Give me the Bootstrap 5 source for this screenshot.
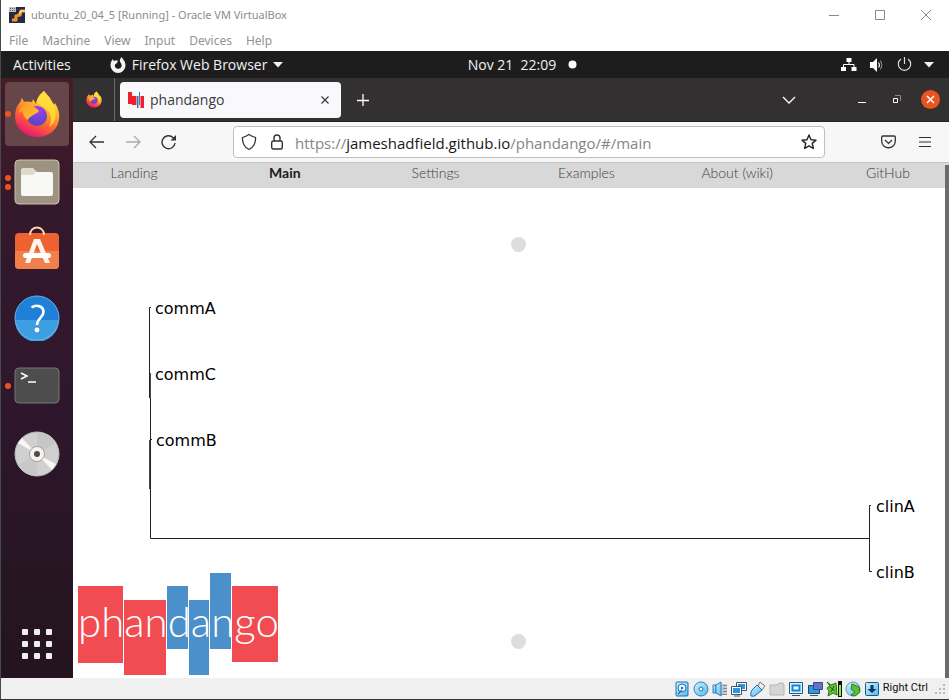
<!DOCTYPE html>
<html lang="en">
<head>
<meta charset="utf-8">
<meta name="viewport" content="width=device-width, initial-scale=1">
<title>ubuntu_20_04_5 [Running] - Oracle VM VirtualBox</title>
<link href="https://cdn.jsdelivr.net/npm/bootstrap@5.3.0/dist/css/bootstrap.min.css" rel="stylesheet">
<style>
body{font-family:"Open Sans","Noto Sans",sans-serif;background:#fff;border-left:1px solid #454a4c;border-bottom:1px solid #333}
button{background:none;border:0;padding:0;color:inherit;line-height:1}
svg{display:block;flex:none}
.vm-title{height:30px;color:#8c8c8c;padding:0 17px 0 8px;font-family:"Noto Sans",sans-serif;font-size:11px;gap:6px}
.vm-controls{gap:34px}
.vm-menu{height:21px;font-size:12px;color:#939393;gap:14px;padding:0 8px;font-family:"Noto Sans",sans-serif}
.gnome-bar{height:27px;background:#1d1d1d;color:#f2f2f2;font-size:14px;padding:0 11px 0 12px}
.gnome-side{flex:1 1 0}
.app-menu{margin-left:39px;gap:6px}
.clock{padding-left:94px;gap:12px}
.dock{width:72px;background:linear-gradient(#461c27 0,#34182b 22%,#2f172d 50%,#23141f 100%);padding-top:4px;padding-bottom:2px}
.dock-item{width:64px;height:64px;border-radius:4px;position:relative;display:grid;place-items:center}
.dock-item.current{background:#664649}
.pips{position:absolute;left:0;top:0;height:64px;width:6px;gap:3px}
.pips i{width:6px;height:6px;border-radius:50%;background:#e95420}
.tab-strip{height:44px;background:#323030;color:#fbfbfe;border-bottom:1px solid #222;padding-right:9px}
.pinned{width:42px;align-self:stretch;border-right:1px solid #6b6969;display:grid;place-items:center}
.page-tab{width:221px;height:36px;margin-left:5px;border-radius:4px;background:#f9f9fb;color:#3b3b3d;font-size:14px;padding:0 11px 0 8px;gap:6px}
.close-dot{width:19px;height:19px;border-radius:50%;background:#e95420;color:#fff;display:grid;place-items:center;margin-left:20px}
.min-win{margin-left:62px}
.max-win{margin-left:25px}
.toolbar{height:41px;background:#f7f7f7;border-bottom:1px solid #c6c6c6;color:#2e2e33;padding:0 18px 0 16px}
.nav-tools{gap:20px}
.menu-tools{gap:23px}
.url-box{margin:0 56px;height:32px;border:1px solid #bfbfc2;border-radius:4px;background:#fff;padding:0 7px;position:relative}
.url-box input{border:0;outline:0;background:transparent;min-width:0;height:28px;margin-left:10px}
.url-box .lock{margin-left:14px}
.url-text{position:absolute;left:61px;top:5px;font-size:15px;line-height:22px;color:#85858a;pointer-events:none;white-space:nowrap}
.url-text b{font-weight:500;color:#18181b}
.site-nav{height:25px;background:#d8d8d8;font-family:Lato,sans-serif;font-size:14px}
.site-nav a{width:122px;text-align:center;text-decoration:none;color:#404040;font-weight:300;line-height:20px}
.site-nav a.current{color:#1b1b1b;font-weight:700}
.tree{width:100%;height:auto}
.tree text{font:16px "DejaVu Sans",sans-serif;fill:#000}
.tree .wordmark{font:300 42px Lato,sans-serif;fill:#fff}
.thumb{position:absolute;right:0;top:2px;bottom:0;width:4px;background:#6b6b6b}
.vm-status{height:21px;background:#f0f0f0;color:#111;font-size:11px;gap:3px;padding:0 4px 0 0;font-family:Roboto,sans-serif}
</style>
<script src="https://cdn.jsdelivr.net/npm/bootstrap@5.3.0/dist/js/bootstrap.bundle.min.js"></script>
</head>
<body class="d-flex flex-column min-vh-100 overflow-x-hidden">
<svg width="0" height="0" class="position-absolute" aria-hidden="true">
<defs>
<linearGradient id="fxBody" x1=".8" y1="0" x2=".3" y2="1"><stop offset="0" stop-color="#fff24a"/><stop offset=".35" stop-color="#ffb52b"/><stop offset=".68" stop-color="#ff5a36"/><stop offset="1" stop-color="#e3127c"/></linearGradient>
<radialGradient id="fxGlobe" cx=".55" cy=".25" r=".8"><stop offset="0" stop-color="#a63df0"/><stop offset=".5" stop-color="#7344d8"/><stop offset="1" stop-color="#4b4bb5"/></radialGradient>
<linearGradient id="fxFox" x1="0" y1="0" x2="1" y2="1"><stop offset="0" stop-color="#ff9a1f"/><stop offset="1" stop-color="#ffc43a"/></linearGradient>
<linearGradient id="vbBlue" x1="0" y1="0" x2="1" y2="1"><stop offset="0" stop-color="#d5f2ff"/><stop offset="1" stop-color="#52b9ee"/></linearGradient>
<symbol id="firefox" viewBox="0 0 46 48">
<path d="M30 1c2 3 5 5 7 9 1 2 2 3 3 5 0-1 1-2 1-2 3 5 5 10 4 16C44 40 34 47 23 47 11 47 1 38 1 26c0-6 2-11 6-15 0-1 0-2 1-3l2 4c3-1 5 0 8 0l1-3c1 2 3 4 3 5 1-6 4-10 8-13z" fill="url(#fxBody)"/>
<path d="M30 1c2 3 5 5 7 9 7 10 6 23-2 27 4-8 2-15-4-19-4-3-8-4-8-6 0-4 4-9 7-11z" fill="#ffde3c" opacity=".8"/>
<circle cx="23" cy="26" r="10" fill="url(#fxGlobe)"/>
<path d="M7 17c3-3 8-2 12-1 2 2 5 3 6 5-1 2-5 3-7 5-2 1-4 2-4 4-4-2-5-6-5-9-1 0-3 1-4 2 0-2 1-4 2-6z" fill="url(#fxFox)"/>
</symbol>
<symbol id="caret" viewBox="0 0 10 6"><path d="M0 0h10L5 5.500z" fill="currentColor"/></symbol>
</defs>
</svg>

<header class="vm-title d-flex align-items-center">
<svg width="16" height="16" viewBox="0 0 16 16" aria-hidden="true"><path fill="#252b42" d="M0 0h16v16H0z"/><path d="M3 13h4V9l4-1 1-4h4" fill="none" stroke="#f4912b" stroke-width="3.200" stroke-linejoin="round"/><path d="M10 7l2-3h4" fill="none" stroke="#ffd9a5" stroke-width="1.500"/><path d="M0 0h7v5H0z" fill="#c4c4c8"/><path d="M1 1.500h5M1 3.500h5" stroke="#666" stroke-dasharray="1 1"/></svg>
<span class="me-auto text-nowrap">ubuntu_20_04_5 [Running] - Oracle VM VirtualBox</span>
<div class="vm-controls d-flex align-items-center">
<button aria-label="Minimize"><svg width="11" height="11"><path d="M0 5.500h10" stroke="#888"/></svg></button>
<button aria-label="Maximize"><svg width="12" height="12"><path d="M1.500 1.500h9v9h-9z" fill="none" stroke="#888"/></svg></button>
<button aria-label="Close"><svg width="12" height="12"><path d="M1 1l10 10M11 1L1 11" stroke="#888"/></svg></button>
</div>
</header>
<nav class="vm-menu d-flex align-items-center" aria-label="Virtual machine menu">
<button>File</button><button>Machine</button><button>View</button><button>Input</button><button>Devices</button><button>Help</button>
</nav>

<div class="gnome-bar d-flex align-items-center text-nowrap">
<div class="gnome-side d-flex align-items-center">
<button>Activities</button>
<button class="app-menu d-flex align-items-center">
<svg width="16" height="16" viewBox="0 0 16 16" aria-hidden="true"><path fill-rule="evenodd" d="M11.500 0c1 2 4 4 4 8.500a7.500 7.500 0 0 1-15 0C.5 5.500 1.500 3.500 3 2l.6 2C5 3.500 6 3.500 8 3.500L7 6 5.500 7c-1 1-.8 2.500 0 3.500 1.500 2 5.200 1.500 6-1 .6-2-.5-3.500-1.500-4.500-.5-2 .5-4 1.500-5z" fill="#f3f3f3"/></svg>
Firefox Web Browser<svg width="10" height="6"><use href="#caret"/></svg></button>
</div>
<div class="clock d-flex align-items-center"><span>Nov 21&nbsp; 22:09</span><svg width="9" height="9" aria-hidden="true"><circle cx="4.500" cy="4.500" r="4" fill="#fff"/></svg></div>
<div class="gnome-side d-flex align-items-center justify-content-end gap-2">
<svg class="me-1" width="16" height="14" viewBox="0 0 16 14" aria-label="Network"><path d="M5.500 0h5v4h-5zM0 9h5v4H0zM10.500 9h5v4h-5z" fill="#fff"/><path d="M8 4v3M2.500 9V6.500h10.500V9" stroke="#fff" fill="none"/></svg>
<svg class="me-1" width="16" height="14" viewBox="0 0 16 14" aria-label="Volume"><path d="M1 4h3l4-4v14l-4-4H1z" fill="#fff"/><path d="M9.500 4.500q2 2.500 0 5" stroke="#eee" fill="none" stroke-width="1.200"/><path d="M11.500 2.500q3 4.500 0 9" stroke="#999" fill="none"/></svg>
<svg class="me-1" width="15" height="15" viewBox="0 0 15 15" aria-label="Power"><path d="M4 2a6.200 6.200 0 1 0 7 0M7.500 0v7" stroke="#ddd" fill="none" stroke-width="1.200"/></svg>
<svg width="10" height="6" class="me-1" aria-hidden="true"><use href="#caret"/></svg>
</div>
</div>

<div class="d-flex flex-grow-1">
<aside class="dock d-flex flex-column align-items-center flex-shrink-0 gap-1">
<button class="dock-item current" aria-label="Firefox"><span class="pips d-flex flex-column justify-content-center"><i></i></span><svg width="46" height="48"><use href="#firefox"/></svg></button>
<button class="dock-item" aria-label="Files"><span class="pips d-flex flex-column justify-content-center"><i></i><i></i></span><svg width="46" height="46" viewBox="0 0 46 46"><rect x="1" y="1" width="44" height="44" rx="4" fill="#9e9380" stroke="#c8c2b3"/><path d="M7 14V11q0-2 2-2h10l4 4h14v6H7z" fill="#dedacd"/><path d="M7 16h12l3-3h15q2 0 2 2v20q0 2-2 2H9q-2 0-2-2z" fill="#f8f8f6"/></svg></button>
<button class="dock-item" aria-label="Ubuntu Software"><svg width="46" height="48" viewBox="0 0 46 48"><rect x="1" y="7" width="44" height="36" rx="4" fill="#ed6230"/><path d="M1 25h44v14q0 4-4 4H5q-4 0-4-4z" fill="#f17f4b"/><path d="M16 9c0-10 14-10 14 0" fill="none" stroke="#f9d7a8" stroke-width="2"/><path d="M20 13h6l10 24h-5l-8-19-7 19h-5z" fill="#fff4ee"/><rect x="9" y="27" width="28" height="5" rx="2.500" fill="#fff"/></svg></button>
<button class="dock-item" aria-label="Help"><svg width="46" height="46" viewBox="0 0 46 46"><circle cx="23" cy="23" r="22" fill="#1f80d7"/><path d="M1 25h44a22 22 0 0 1-44 0z" fill="#3d9fe2"/><circle cx="23" cy="23" r="22" fill="none" stroke="#69b2ea"/><path d="M17.500 12.500c5-3.500 12-1.500 12 4.500 0 6-6.500 6-6.500 13" fill="none" stroke="#fff" stroke-width="2.600"/><circle cx="23" cy="35" r="2.400" fill="#fff"/></svg></button>
<button class="dock-item" aria-label="Terminal"><span class="pips d-flex flex-column justify-content-center"><i></i></span><svg width="46" height="38" viewBox="0 0 46 38"><rect x="1" y="1" width="44" height="35" rx="4" fill="#4d4d4d" stroke="#777"/><path d="M7 6l6 3-6 3M14 15h8" fill="none" stroke="#fff" stroke-width="1.500"/></svg></button>
<button class="dock-item" aria-label="Disc"><svg width="46" height="46" viewBox="0 0 46 46"><circle cx="23" cy="23" r="22" fill="#d0d0d0" stroke="#bbb"/><path d="M23 23V1A22 22 0 0 1 42 12z" fill="#c6c6c6"/><path d="M23 23v22A22 22 0 0 1 4 34z" fill="#c8c8c8"/><path d="M23 23L4 12l4-5zM23 23l19 10-4 6z" fill="#f7f7f5"/><circle cx="23" cy="23" r="7.500" fill="#f4f3ef" stroke="#aaa28f"/><circle cx="23" cy="23" r="3" fill="#4d4d4d"/></svg></button>
<button class="dock-item mt-auto" aria-label="Show applications"><svg width="30" height="30" viewBox="0 0 30 30" fill="#eee"><g id="dotRow"><rect width="6" height="6" rx="1"/><rect x="12" width="6" height="6" rx="1"/><rect x="24" width="6" height="6" rx="1"/></g><use href="#dotRow" y="12"/><use href="#dotRow" y="24"/></svg></button>
</aside>

<main class="flex-grow-1 d-flex flex-column">
<div class="tab-strip d-flex align-items-center">
<button class="pinned" aria-label="Pinned tab"><svg width="16" height="17"><use href="#firefox"/></svg></button>
<div class="page-tab d-flex align-items-center">
<svg width="16" height="16" viewBox="0 0 16 16" aria-hidden="true"><path d="M0 0h4v12H0zM4 4h4.500v9H4zM12.500 4H16v12h-3.500z" fill="#ee202e"/><path d="M9 4h1.500v12H9zM11 0h1v13h-1z" fill="#3579b6"/></svg>
<span class="me-auto">phandango</span>
<button aria-label="Close tab"><svg width="10" height="10"><path d="M1.500 1.500l7 7M8.500 1.500l-7 7" stroke="#3b3b3d" stroke-width="1.200"/></svg></button>
</div>
<button class="ms-3 me-auto" aria-label="New tab"><svg width="12" height="12"><path d="M0 6.500h12M6 0v12" stroke="#fff" stroke-width="1.300"/></svg></button>
<button aria-label="List tabs"><svg width="14" height="8"><path d="M1 1l6 6 6-6" fill="none" stroke="#fff" stroke-width="1.300"/></svg></button>
<button class="min-win" aria-label="Minimize window"><svg width="9" height="9"><path d="M0 7.500h8" stroke="#fff"/></svg></button>
<button class="max-win" aria-label="Restore window"><svg width="9" height="9"><path d="M1.500 3.500h4v4h-4z" fill="none" stroke="#fff"/><path d="M3 .5h5.500V6" fill="none" stroke="#888"/></svg></button>
<button class="close-dot" aria-label="Close window"><svg width="9" height="9"><path d="M1 1l7 7M8 1L1 8" stroke="#fff" stroke-width="1.500"/></svg></button>
</div>

<div class="toolbar d-flex align-items-center">
<div class="nav-tools d-flex align-items-center">
<button aria-label="Back"><svg width="16" height="14"><path d="M15 7H1M7 1L1 7l6 6" fill="none" stroke="#333" stroke-width="1.300"/></svg></button>
<button aria-label="Forward"><svg width="16" height="14"><path d="M1 7h14M9 1l6 6-6 6" fill="none" stroke="#aaa" stroke-width="1.300"/></svg></button>
<button aria-label="Reload"><svg width="16" height="16"><path d="M14 9a6.500 6.500 0 1 1-2-5.500l2 2" fill="none" stroke="#333" stroke-width="1.400"/><path d="M15 1v5.500H9.500z" fill="#333"/></svg></button>
</div>
<div class="url-box flex-grow-1 d-flex align-items-center">
<svg width="16" height="18" viewBox="0 0 16 18" aria-hidden="true"><path d="M8 1.500Q5 3.500 1.500 4.500C1 10 4 15 8 16.500 12 15 15 10 14.500 4.500 11 3.500 8 1.500 8 1.500z" fill="none" stroke="#333" stroke-width="1.300"/></svg>
<svg class="lock" width="12" height="16" viewBox="0 0 12 16" aria-hidden="true"><rect x=".7" y="7" width="10.600" height="8" rx="1.500" fill="none" stroke="#333" stroke-width="1.400"/><path d="M3 7V4q0-3 3-3t3 3v3" fill="none" stroke="#333" stroke-width="1.400"/></svg>
<input id="address" class="flex-grow-1" type="text">
<label class="url-text" for="address">https://<b>jameshadfield.github.io</b>/phandango/#/main</label>
<button aria-label="Bookmark"><svg width="16" height="16" viewBox="0 0 16 16"><path d="M8 1l2 4.700 5 .4-3.800 3.300 1.200 5.100L8 11.800l-4.400 2.700 1.200-5.100L1 6.100l5-.4z" fill="none" stroke="#222" stroke-width="1.400" stroke-linejoin="round"/></svg></button>
</div>
<div class="menu-tools d-flex align-items-center">
<button aria-label="Pocket"><svg width="15" height="14" viewBox="0 0 15 14"><path d="M2 1h11q1.300 0 1.300 1.300V6c0 9-13.600 9-13.600 0V2.300Q.7 1 2 1zM4 5l3.500 3.400L11 5" fill="none" stroke="#333" stroke-width="1.300"/></svg></button>
<button aria-label="Menu"><svg width="12" height="12"><path d="M0 1.500h12M0 6h12M0 10.500h12" stroke="#333" stroke-width="1.200"/></svg></button>
</div>
</div>

<div class="position-relative flex-grow-1">
<nav class="site-nav d-flex justify-content-between" aria-label="Site">
<a href="#landing">Landing</a><a href="#main" class="current" aria-current="page">Main</a><a href="#settings">Settings</a><a href="#examples">Examples</a><a href="#wiki">About (wiki)</a><a href="#github">GitHub</a>
</nav>
<svg class="tree" viewBox="73 188 876 490" role="img" aria-label="Phylogenetic tree">
<circle cx="518.500" cy="244.500" r="7.500" fill="#ddd"/><circle cx="518.500" cy="641.500" r="7.500" fill="#ddd"/>
<g fill="none" stroke="#222"><path d="M151 307.500h-1.500V398M150.500 398V538.500H869.500M871 505.500h-1.500V571.500h2.500"/><path d="M150 373v25M150 440v49" stroke-width="1.600"/><path d="M150 439.500h2"/></g>
<text x="155" y="314">commA</text><text x="155" y="380">commC</text><text x="156" y="446">commB</text><text x="876" y="512">clinA</text><text x="876" y="578">clinB</text>
<g fill="#f04c51"><path d="M78 586h45v77H78zM124 600h42v75h-42zM232 586h46v76h-46z"/></g>
<path d="M167 586h21v63h-21zM189 600h20v75h-20zM210 573h21v76h-21z" fill="#4b90ca"/>
<text class="wordmark" x="78" y="637">phandango</text>
</svg>
<div class="thumb"></div>
</div>
</main>
</div>

<footer class="vm-status d-flex align-items-center justify-content-end">
<svg width="16" height="16" viewBox="0 0 16 16"><rect x="2" y="1" width="12" height="14" rx="1" fill="url(#vbBlue)" stroke="#1c70b2"/><circle cx="8" cy="7" r="4" fill="#e9f8ff" stroke="#1c70b2"/><circle cx="8" cy="7" r="1.200" fill="#1c70b2"/><path d="M4 13l4-4" stroke="#1c70b2" stroke-width="1.500"/></svg>
<svg width="16" height="16" viewBox="0 0 16 16"><circle cx="8" cy="8" r="7" fill="url(#vbBlue)" stroke="#2a80c0"/><circle cx="8" cy="8" r="2" fill="#fff" stroke="#1c70b2"/></svg>
<svg width="16" height="16" viewBox="0 0 16 16"><path d="M9 3h6v11H9z" fill="#c8c8c8"/><path d="M11 4.500h4M11 7.500h4M11 10.500h4M9 13.500h6" stroke="#888"/><path d="M1 4h3v8H1z" fill="url(#vbBlue)" stroke="#2a80c0"/><path d="M4 4l5-3v14l-5-3z" fill="url(#vbBlue)" stroke="#2a80c0"/></svg>
<svg width="16" height="16" viewBox="0 0 16 16"><path d="M5.500 1.500h10v8h-10z" fill="#fff" stroke="#357"/><path d="M7 3h7v5H7z" fill="#3095dd"/><path d="M.5 5.500h10v8H.5z" fill="#fff" stroke="#357"/><path d="M2 7h7v5H2z" fill="#3095dd"/><path d="M3 15h6" stroke="#555"/></svg>
<svg width="16" height="16" viewBox="0 0 16 16"><path d="M10 1l5 4-3 4-4-4z" fill="#eee" stroke="#777"/><path d="M7 4l5 5-6 5q-2 2-5 1-1-3 1-6z" fill="url(#vbBlue)" stroke="#1c70b2"/></svg>
<svg width="16" height="16" viewBox="0 0 16 16"><path d="M1 14V4h7l2-2h4l1 2v10z" fill="#d5d5d5" stroke="#b4b4b4"/></svg>
<svg width="16" height="16" viewBox="0 0 16 16"><path d="M1.500 1.500h13v11h-13z" fill="#d5f0ff" stroke="#1c5e96"/><path d="M4.500 4.500h7v5h-7z" fill="#fff" stroke="#1d82cb" stroke-width="2"/><path d="M4 14.500h8" stroke="#456"/></svg>
<svg width="16" height="16" viewBox="0 0 16 16"><path d="M1.500 4.500h11v8h-11z" fill="#2b9be4" stroke="#246"/><path d="M6.500 1.500h9v7h-9z" fill="#6670c4" stroke="#3c478e"/><path d="M3 14.500h8" stroke="#456"/></svg>
<svg width="16" height="16" viewBox="0 0 16 16"><path d="M1 1l4 3 5-2 1 12-4-2-5 3 1-5-2-3 3-2z" fill="#65c832" stroke="#28701b"/><path d="M4 6l5 4M8 5l-3 6" stroke="#205b18"/><path d="M12 0h4v16h-4z" fill="#111"/><path d="M13 4h2v11h-2z" fill="#8af03a"/></svg>
<svg width="16" height="16" viewBox="0 0 16 16"><circle cx="8" cy="8" r="7" fill="url(#vbBlue)" stroke="#5d98b8"/><path d="M7 3l7 3 1 5-5 4-4-1 4-3-4-3z" fill="#5fbd32" stroke="#317d20"/></svg>
<svg width="16" height="16" viewBox="0 0 16 16"><rect x="1.500" y="1.500" width="13" height="13" rx="1" fill="url(#vbBlue)" stroke="#18598d"/><path d="M6.500 4h3v4h3L8 12 3.500 8h3z" fill="#12355c"/></svg>
<span class="text-nowrap">Right Ctrl</span>
<svg class="ms-1" width="10" height="10" viewBox="0 0 10 10" fill="#b9b9b9" aria-hidden="true"><path d="M8 0h2v2H8zM4 4h2v2H4zM8 4h2v2H8zM0 8h2v2H0zM4 8h2v2H4zM8 8h2v2H8z"/></svg>
</footer>
</body>
</html>
